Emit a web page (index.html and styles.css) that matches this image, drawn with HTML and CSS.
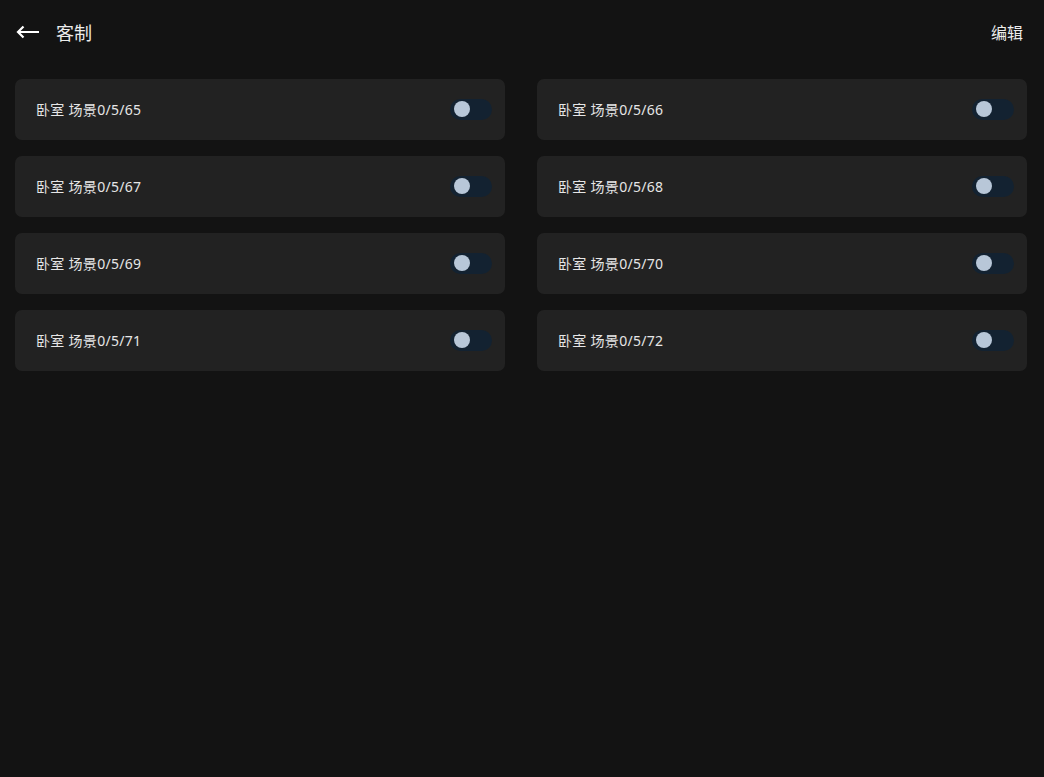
FILE: index.html
```html
<!DOCTYPE html>
<html lang="zh">
<head>
<meta charset="utf-8">
<link rel="stylesheet" href="styles.css">
</head>
<body>
<header class="topbar">
  <div class="left">
    <svg class="back" width="24" height="14" viewBox="0 0 24 14"><path d="M23 7H2M7.5 1.5L2 7l5.5 5.5" fill="none" stroke="#fff" stroke-width="2.2" stroke-linecap="butt" stroke-linejoin="miter"/></svg>
    <span class="title">客制</span>
  </div>
  <span class="edit">编辑</span>
</header>
<main class="grid">
  <div class="card"><span class="name">卧室 场景0/5/65</span><span class="toggle"><span class="knob"></span></span></div>
  <div class="card"><span class="name">卧室 场景0/5/66</span><span class="toggle"><span class="knob"></span></span></div>
  <div class="card"><span class="name">卧室 场景0/5/67</span><span class="toggle"><span class="knob"></span></span></div>
  <div class="card"><span class="name">卧室 场景0/5/68</span><span class="toggle"><span class="knob"></span></span></div>
  <div class="card"><span class="name">卧室 场景0/5/69</span><span class="toggle"><span class="knob"></span></span></div>
  <div class="card"><span class="name">卧室 场景0/5/70</span><span class="toggle"><span class="knob"></span></span></div>
  <div class="card"><span class="name">卧室 场景0/5/71</span><span class="toggle"><span class="knob"></span></span></div>
  <div class="card"><span class="name">卧室 场景0/5/72</span><span class="toggle"><span class="knob"></span></span></div>
</main>
</body>
</html>
```
FILE: styles.css
```css
html, body {
  margin: 0;
  padding: 0;
  background: #131313;
  height: 100%;
}
body {
  font-family: "Noto Sans", "Noto Sans CJK SC", sans-serif;
  color: #e8e8e8;
}
.topbar {
  height: 63px;
  display: flex;
  align-items: center;
  justify-content: space-between;
  padding: 0 21px 2px 16px;
}
.left {
  display: flex;
  align-items: center;
}
.back {
  display: block;
  margin-right: 16px;
  margin-top: 1px;
}
.title {
  font-size: 18px;
  color: #ececec;
  font-family: "Noto Sans CJK SC", sans-serif;
}
.edit {
  font-size: 16px;
  color: #ececec;
  font-family: "Noto Sans CJK SC", sans-serif;
}
.grid {
  display: grid;
  grid-template-columns: 490px 490px;
  column-gap: 32px;
  row-gap: 16px;
  padding: 14px 0 0 15px;
}
.card {
  height: 61px;
  background: #222222;
  border-radius: 7px;
  display: flex;
  align-items: center;
  justify-content: space-between;
  padding: 0 13px 2px 21px;
  box-sizing: border-box;
}
.name {
  font-size: 14px;
  letter-spacing: 0.3px;
  color: #e6e6e6;
  font-family: "Noto Sans", "Noto Sans CJK SC", sans-serif;
}
.toggle {
  width: 42px;
  height: 21px;
  border-radius: 11px;
  background: #132231;
  display: flex;
  align-items: center;
  padding-left: 4px;
  box-sizing: border-box;
  margin-top: 1px;
}
.knob {
  width: 16px;
  height: 16px;
  border-radius: 50%;
  background: #b8c7d8;
}
```
